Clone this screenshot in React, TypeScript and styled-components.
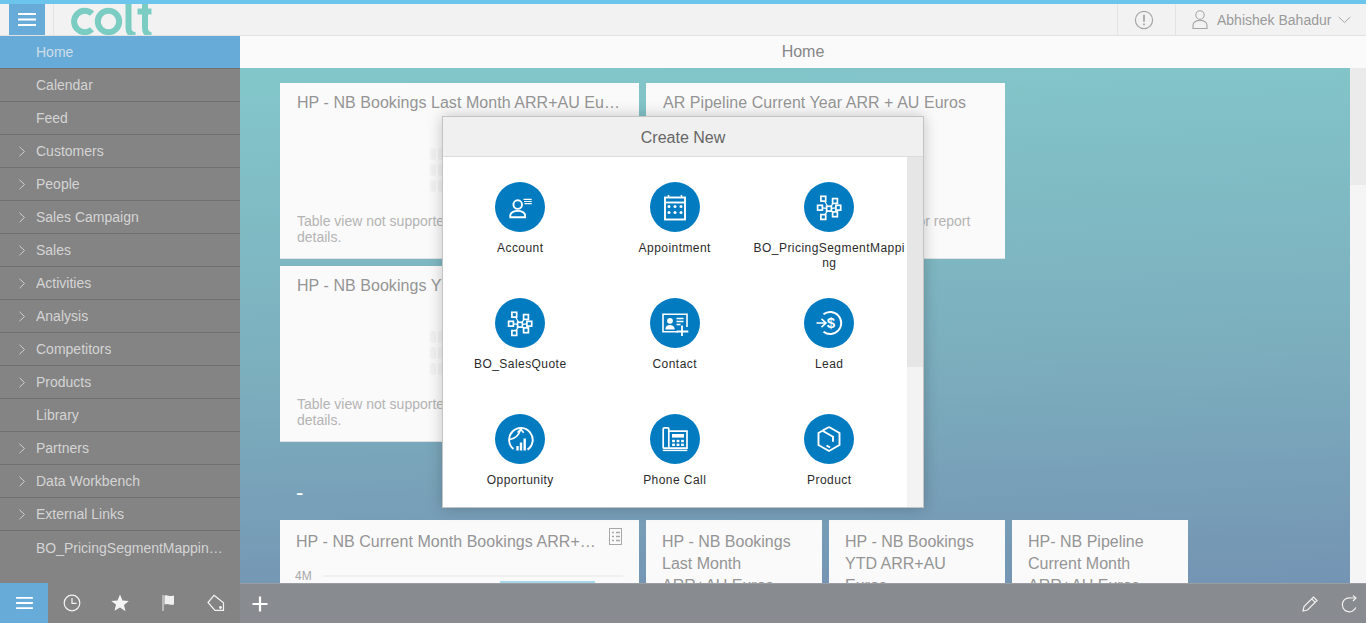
import React, { FC, ReactNode } from "react";
import styled, { createGlobalStyle } from "styled-components";

const GlobalStyle = createGlobalStyle`
  html, body, #root { margin: 0; height: 100%; overflow: hidden; }
  body { font-family: "Liberation Sans", Arial, sans-serif; }
  * { box-sizing: border-box; }
`;

const Page = styled.div`
  position: relative;
  display: flex;
  flex-direction: column;
  height: 100vh;
  border-top: 4px solid #6cc5ec;
  background: #f5f5f5;
`;

const TopBar = styled.header`
  display: flex;
  align-items: stretch;
  height: 32px;
  flex: none;
  background: #f2f2f2;
  border-bottom: 1px solid #e2e2e2;
`;

const MenuToggle = styled.div`
  display: flex;
  align-items: center;
  justify-content: center;
  width: 36px;
  margin-left: 9px;
  background: #67acd8;
`;

const LogoSlot = styled.div`
  width: 200px;
  margin-left: 8px;
  padding-left: 16px;
  border-left: 1px solid #e4e4e4;
  overflow: hidden;
`;

const Spacer = styled.div`
  flex: 1;
`;

const AlertSlot = styled.div`
  display: flex;
  align-items: center;
  justify-content: center;
  width: 59px;
  padding-right: 6px;
  border-left: 1px solid #e4e4e4;
  border-right: 1px solid #e4e4e4;
`;

const UserSlot = styled.div`
  display: flex;
  align-items: center;
  width: 190px;
  padding-left: 16px;
  font-size: 14px;
  color: #9a9a9a;
`;

const UserName = styled.span`
  margin: 0 7px 0 9px;
`;

const Main = styled.div`
  display: flex;
  flex: 1;
  min-height: 0;
`;

const Sidebar = styled.nav`
  width: 240px;
  flex: none;
  background: #848484;
  overflow: hidden;
`;

const SideRow = styled.div<{ $active?: boolean }>`
  position: relative;
  display: flex;
  align-items: center;
  height: 33px;
  padding: 0 12px 0 36px;
  font-size: 14px;
  color: ${(p) => (p.$active ? "#d0dee8" : "#d4d4d4")};
  background: ${(p) => (p.$active ? "#67acd8" : "transparent")};
  border-bottom: 1px solid #6f6f6f;
  &:last-child { border-bottom: none; }
`;

const SideLabel = styled.span`
  overflow: hidden;
  white-space: nowrap;
  text-overflow: ellipsis;
`;

const Chevron = styled.svg`
  position: absolute;
  left: 18px;
  top: 11px;
`;

const ContentColumn = styled.div`
  display: flex;
  flex-direction: column;
  flex: 1;
  min-width: 0;
`;

const SubHeader = styled.div`
  height: 32px;
  flex: none;
  display: flex;
  align-items: center;
  justify-content: center;
  font-size: 16px;
  color: #868686;
  background: #fafafa;
`;

const ContentRow = styled.div`
  display: flex;
  flex: 1;
  min-height: 0;
`;

const Canvas = styled.main`
  flex: 1;
  padding: 15px 40px 0;
  overflow: hidden;
  background: linear-gradient(178deg, #83c7ca 0%, #7cafbe 55%, #7494b3 100%);
`;

const Track = styled.div`
  width: 16px;
  flex: none;
  background: #f5f5f5;
`;

const Thumb = styled.div`
  height: 117px;
  background: #ebebeb;
`;

const TileGrid = styled.section`
  display: grid;
  grid-template-columns: 359px 359px;
  gap: 7px;
`;

const Tile = styled.article`
  position: relative;
  height: 176px;
  padding: 10px 17px;
  background: #fafafa;
  border-bottom: 1px solid #dde3e5;
  overflow: hidden;
`;

const TileTitle = styled.h3`
  margin: 0;
  font-size: 16px;
  font-weight: 400;
  line-height: 20px;
  letter-spacing: 0.05px;
  color: #959595;
  white-space: nowrap;
  overflow: hidden;
  text-overflow: ellipsis;
`;

const TileNote = styled.p`
  position: absolute;
  left: 17px;
  right: 17px;
  top: 130px;
  margin: 0;
  font-size: 14px;
  line-height: 16px;
  color: #b4b4b4;
`;

const GhostTable = styled.div`
  position: absolute;
  left: 150px;
  top: 65px;
  display: grid;
  grid-template-columns: 6px 40px;
  grid-auto-rows: 12px;
  gap: 4px 2px;
`;

const GhostCell = styled.div`
  border-radius: 2px;
  background: #f2f2f2;
`;

const SectionDash = styled.div`
  height: 78px;
  padding: 41px 0 0 16px;
  font-size: 22px;
  line-height: 20px;
  color: #ffffff;
`;

const BottomTiles = styled.section`
  display: flex;
  gap: 7px;
`;

const ChartTile = styled.article`
  position: relative;
  width: 359px;
  height: 120px;
  padding: 12px 42px 0 16px;
  background: #fafafa;
`;

const SmallTile = styled.article`
  width: 176px;
  height: 120px;
  padding: 11px 16px 0;
  font-size: 16px;
  line-height: 22px;
  color: #959595;
  background: #fafafa;
`;

const TableGlyph = styled.svg`
  position: absolute;
  top: 8px;
  right: 16px;
`;

const AxisLabel = styled.span`
  position: absolute;
  left: 15px;
  top: 49px;
  font-size: 12px;
  color: #a8a8a8;
`;

const GridLine = styled.div`
  position: absolute;
  left: 43px;
  right: 16px;
  top: 55px;
  height: 2px;
  background: #f0f0f0;
`;

const Bar = styled.div`
  position: absolute;
  left: 220px;
  top: 61px;
  width: 95px;
  height: 40px;
  background: #a6d8ec;
`;

const BottomBar = styled.footer`
  display: flex;
  align-items: stretch;
  height: 40px;
  flex: none;
  background: #888c90;
  border-top: 1px solid #9a9ea2;
`;

const BottomNav = styled.div`
  display: flex;
  width: 240px;
  margin-top: -1px;
  background: #848484;
`;

const NavTile = styled.div<{ $active?: boolean }>`
  display: flex;
  align-items: center;
  justify-content: center;
  width: 48px;
  background: ${(p) => (p.$active ? "#67acd8" : "transparent")};
`;

const AddButton = styled.div`
  display: flex;
  align-items: center;
  justify-content: center;
  width: 40px;
`;

const BottomActions = styled.div`
  display: flex;
  align-items: center;
  gap: 23px;
  padding-right: 7px;
`;

const Modal = styled.div`
  position: absolute;
  left: 442px;
  top: 112px;
  width: 482px;
  height: 392px;
  display: flex;
  flex-direction: column;
  background: #ffffff;
  border: 1px solid #c4c4c4;
  box-shadow: 0 0 14px rgba(0, 0, 0, 0.22);
`;

const ModalHeader = styled.div`
  display: flex;
  align-items: center;
  justify-content: center;
  height: 40px;
  padding-top: 2px;
  flex: none;
  font-size: 16px;
  color: #666666;
  background: #f0f0f0;
  border-bottom: 1px solid #dcdcdc;
`;

const ModalBody = styled.div`
  display: flex;
  flex: 1;
  min-height: 0;
`;

const CreateGrid = styled.div`
  flex: 1;
  display: grid;
  grid-template-columns: repeat(3, 154.5px);
  grid-auto-rows: 116px;
  padding-top: 25px;
  overflow: hidden;
`;

const CreateItem = styled.div`
  display: flex;
  flex-direction: column;
  align-items: center;
  min-width: 0;
`;

const IconCircle = styled.div`
  width: 50px;
  height: 50px;
  flex: none;
  border-radius: 50%;
  background: #027bc1;
`;

const ItemLabel = styled.div`
  width: 154px;
  margin-top: 9px;
  font-size: 12px;
  line-height: 15px;
  letter-spacing: 0.45px;
  text-align: center;
  color: #2b2b2b;
  overflow-wrap: anywhere;
`;

const ModalScroll = styled.div`
  width: 16px;
  flex: none;
  background: #f3f3f3;
`;

const ModalThumb = styled.div`
  height: 210px;
  background: #e6e6e6;
`;

const W: FC<{ children: ReactNode }> = ({ children }) => (
  <svg width="50" height="50" viewBox="0 0 50 50" fill="none" stroke="#fff" strokeWidth="1.7">
    {children}
  </svg>
);

const Hierarchy = () => (
  <W>
    {[[19.3, 16.7], [31, 19], [16, 25.7], [34.3, 25.7], [19.3, 35], [31, 32.3]].map(([x, y]) => (
      <React.Fragment key={`${x}-${y}`}>
        <path d={`M25 26.7L${x} ${y}`} strokeWidth="1.2" />
        <rect x={x - 2.4} y={y - 2.4} width="4.8" height="4.8" fill="#027bc1" />
      </React.Fragment>
    ))}
    <rect x="22.6" y="24.3" width="4.8" height="4.8" fill="#027bc1" />
  </W>
);

const icons: Record<string, ReactNode> = {
  Account: (
    <W>
      <circle cx="22.7" cy="22.6" r="4.3" strokeWidth="1.9" />
      <path d="M15.3 35.3v-2c0-2.6 3.6-4.4 7.4-4.4s7.4 1.8 7.4 4.4v2z" strokeWidth="1.9" />
      <path d="M28.5 17.3h8.2M29 19.5h7.7M29.5 21.7h7.2" strokeWidth="1.2" />
    </W>
  ),
  Appointment: (
    <W>
      <rect x="15" y="15.5" width="20" height="22" strokeWidth="1.9" />
      <path d="M15 20.5h20" strokeWidth="1.9" />
      <path d="M18.5 13v3M31.5 13v3" strokeWidth="1.6" />
      {[19, 25, 31].map((x) =>
        [24.5, 30.5].map((y) => <circle key={`${x}${y}`} cx={x} cy={y} r="1.5" fill="#fff" stroke="none" />)
      )}
    </W>
  ),
  Hierarchy: <Hierarchy />,
  Contact: (
    <W>
      <path d="M28 33.7H13V16.3h24V29" strokeWidth="1.6" />
      <circle cx="20" cy="22.8" r="2.9" fill="#fff" stroke="none" />
      <path d="M15.3 31.5c0-3 2.2-4.4 4.7-4.4s4.7 1.4 4.7 4.4z" fill="#fff" stroke="none" />
      <path d="M26.5 20.5h7M26.5 23.5h7M26.5 26.5h4" strokeWidth="1.3" />
      <path d="M32 27.5v10.4M26.7 33.5h11.6" strokeWidth="1.8" />
    </W>
  ),
  Lead: (
    <W>
      <path d="M19.5 16.3a11 11 0 1 1 0 17.4" strokeWidth="1.9" />
      <path d="M12.5 25h9.5M17.5 20.8l4.5 4.2-4.5 4.2" strokeWidth="1.6" />
      <text x="27" y="30.2" fontFamily="Liberation Sans" fontSize="15" fontWeight="700" fill="#fff" stroke="none" textAnchor="middle">$</text>
    </W>
  ),
  Opportunity: (
    <W>
      <path d="M18.5 35a11.8 11.8 0 1 1 14 .6" strokeWidth="1.9" />
      <path d="M15 25.5c5-1 8.5-3.5 10.5-9.5" strokeWidth="1.6" />
      <path d="M22.5 18.5l3.3-3.3 2.9 3.5" strokeWidth="1.6" />
      <path d="M22.5 36.5v-4.5M26 36.5V28.5M29.7 36.5V24.5" strokeWidth="2.4" />
    </W>
  ),
  Phone: (
    <W>
      <rect x="13.2" y="13.8" width="5.6" height="20.4" rx="1" strokeWidth="1.7" />
      <path d="M12.7 36.4h24.6" strokeWidth="1.5" />
      <path d="M19 17.2h18v17H19" strokeWidth="1.7" />
      <rect x="22" y="20" width="12" height="3.6" fill="#fff" stroke="none" />
      {[23.5, 28, 32.5].map((x) =>
        [27, 30.8].map((y) => <rect key={`${x}${y}`} x={x - 1.4} y={y - 1.2} width="2.8" height="2.4" fill="#fff" stroke="none" />)
      )}
    </W>
  ),
  Product: (
    <W>
      <path d="M25 13l10.5 6v12L25 37l-10.5-6V19l4-2.3" strokeWidth="1.9" />
      <path d="M18.5 16.7L29 22.7v5M25 13l-6.5 3.7" strokeWidth="1.9" />
      <path d="M22.5 31.5l3.6 2" strokeWidth="2" />
    </W>
  ),
};

const createItems = [
  { label: "Account", icon: "Account" },
  { label: "Appointment", icon: "Appointment" },
  { label: "BO_PricingSegmentMapping", icon: "Hierarchy" },
  { label: "BO_SalesQuote", icon: "Hierarchy" },
  { label: "Contact", icon: "Contact" },
  { label: "Lead", icon: "Lead" },
  { label: "Opportunity", icon: "Opportunity" },
  { label: "Phone Call", icon: "Phone" },
  { label: "Product", icon: "Product" },
];

const sideItems = [
  { title: "Home" },
  { title: "Calendar" },
  { title: "Feed" },
  { title: "Customers", sub: true },
  { title: "People", sub: true },
  { title: "Sales Campaign", sub: true },
  { title: "Sales", sub: true },
  { title: "Activities", sub: true },
  { title: "Analysis", sub: true },
  { title: "Competitors", sub: true },
  { title: "Products", sub: true },
  { title: "Library" },
  { title: "Partners", sub: true },
  { title: "Data Workbench", sub: true },
  { title: "External Links", sub: true },
  { title: "BO_PricingSegmentMappin…" },
];

const Burger: FC<{ size: number }> = ({ size }) => (
  <svg width={size} height={size - 3} viewBox="0 0 18 15" stroke="#fff" strokeWidth="2">
    <path d="M0 2h18M0 7.5h18M0 13h18" />
  </svg>
);

const NoDataTile: FC<{ title: string; note: string }> = ({ title, note }) => (
  <Tile>
    <TileTitle>{title}</TileTitle>
    <GhostTable>
      {Array.from({ length: 6 }).map((_, i) => (
        <GhostCell key={i} />
      ))}
    </GhostTable>
    <TileNote>{note}</TileNote>
  </Tile>
);

const NOTE = "Table view not supported for this dataset or report details.";

const App: FC = () => (
  <Page>
    <GlobalStyle />
    <TopBar>
      <MenuToggle>
        <Burger size={18} />
      </MenuToggle>
      <LogoSlot>
        <svg width="84" height="31" viewBox="0 0 84 31" fill="none" stroke="#7bcdc3" strokeWidth="6">
          <path d="M22 9.6a10.7 10.7 0 1 0 0 15.8" />
          <circle cx="38.5" cy="17.5" r="10.7" />
          <path d="M58.5 -2v26c0 4 2 7 7 7" />
          <path d="M75 -2v26c0 4 2 7 6.5 7M67.5 7.5h14" />
        </svg>
      </LogoSlot>
      <Spacer />
      <AlertSlot>
        <svg width="20" height="20" viewBox="0 0 20 20" fill="none" stroke="#a6a6a6" strokeWidth="1.2">
          <circle cx="10" cy="10" r="8.6" />
          <path d="M10 4.8v7" strokeWidth="1.8" />
          <path d="M10 13.5v1.8" strokeWidth="1.8" />
        </svg>
      </AlertSlot>
      <UserSlot>
        <svg width="16" height="20" viewBox="0 0 16 20" fill="none" stroke="#a6a6a6" strokeWidth="1.1">
          <circle cx="8" cy="5" r="4.2" />
          <path d="M1 18.5v-3.5c0-2.6 3-4.6 7-4.6s7 2 7 4.6v3.5z" />
        </svg>
        <UserName>Abhishek Bahadur</UserName>
        <svg width="13" height="8" viewBox="0 0 13 8" fill="none" stroke="#a6a6a6" strokeWidth="1">
          <path d="M.7 1l5.8 5.6L12.3 1" />
        </svg>
      </UserSlot>
    </TopBar>
    <Main>
      <Sidebar>
        {sideItems.map((item, index) => (
          <SideRow key={item.title} $active={index === 0}>
            {item.sub && (
              <Chevron width="8" height="11" viewBox="0 0 8 11" fill="none" stroke="#cfcfcf" strokeWidth="1">
                <path d="M1.5 .8l5 4.7-5 4.7" />
              </Chevron>
            )}
            <SideLabel>{item.title}</SideLabel>
          </SideRow>
        ))}
      </Sidebar>
      <ContentColumn>
        <SubHeader>Home</SubHeader>
        <ContentRow>
          <Canvas>
            <TileGrid>
              <NoDataTile title="HP - NB Bookings Last Month ARR+AU Euros" note={NOTE} />
              <NoDataTile title="AR Pipeline Current Year ARR + AU Euros" note={NOTE} />
              <NoDataTile title="HP - NB Bookings YTD ARR+AU Euros" note={NOTE} />
            </TileGrid>
            <SectionDash>-</SectionDash>
            <BottomTiles>
              <ChartTile>
                <TileTitle>HP - NB Current Month Bookings ARR+AU Euros</TileTitle>
                <TableGlyph width="14" height="18" viewBox="0 0 14 18" fill="none" stroke="#a8a8a8">
                  <rect x=".5" y=".5" width="12" height="16" />
                  <path d="M3 4.5h2M7 4.5h4M3 8.5h2M7 8.5h4M3 12.5h2M7 12.5h4" strokeWidth="1.4" />
                </TableGlyph>
                <AxisLabel>4M</AxisLabel>
                <GridLine />
                <Bar />
              </ChartTile>
              <SmallTile>HP - NB Bookings Last Month ARR+AU Euros</SmallTile>
              <SmallTile>HP - NB Bookings YTD ARR+AU Euros</SmallTile>
              <SmallTile>HP- NB Pipeline Current Month ARR+AU Euros</SmallTile>
            </BottomTiles>
          </Canvas>
          <Track>
            <Thumb />
          </Track>
        </ContentRow>
      </ContentColumn>
    </Main>
    <BottomBar>
      <BottomNav>
        <NavTile $active>
          <Burger size={17} />
        </NavTile>
        <NavTile>
          <svg width="18" height="18" viewBox="0 0 18 18" fill="none" stroke="#f4f4f4" strokeWidth="1.2">
            <circle cx="9" cy="9" r="7.8" />
            <path d="M9 4v5.3h4.5" />
          </svg>
        </NavTile>
        <NavTile>
          <svg width="18" height="18" viewBox="0 0 18 18" fill="#f4f4f4">
            <path d="M9 .5l2.5 5.9 6.3.5-4.8 4.1 1.5 6.2L9 13.4l-5.5 3.3L5 10.5.2 6.9l6.3-.5z" />
          </svg>
        </NavTile>
        <NavTile>
          <svg width="16" height="18" viewBox="0 0 16 18" fill="#f0f0f0">
            <path d="M2.5 1h1v16h-1z" />
            <path d="M4.5 1.5c3-1 4.5 1 7 .5l2.5-.5v9c-3 1-4.5-.5-7-.5l-2.5.5z" />
          </svg>
        </NavTile>
        <NavTile>
          <svg width="18" height="18" viewBox="0 0 18 18" fill="none" stroke="#f4f4f4" strokeWidth="1.2">
            <path d="M7 1.3l9.5 7.5v7.5H8L1 8.5z" />
            <circle cx="13.5" cy="13.5" r=".8" fill="#f4f4f4" />
          </svg>
        </NavTile>
      </BottomNav>
      <AddButton>
        <svg width="16" height="16" viewBox="0 0 16 16" stroke="#fff" strokeWidth="2.2">
          <path d="M8 .5v15M.5 8h15" />
        </svg>
      </AddButton>
      <Spacer />
      <BottomActions>
        <svg width="16" height="16" viewBox="0 0 16 16" fill="none" stroke="#f0f0f0" strokeWidth="1.2">
          <path d="M1 15l1-4.500L11.5 1 15 4.500 5.500 14z" />
          <path d="M9.7 2.8l3.5 3.5" />
        </svg>
        <svg width="18" height="18" viewBox="0 0 18 18" fill="none" stroke="#f0f0f0" strokeWidth="1.2">
          <path d="M14.8 12.5A7 7 0 1 1 10 3h5" />
          <path d="M12 .5L15 3l-3 3" />
        </svg>
      </BottomActions>
    </BottomBar>
    <Modal>
      <ModalHeader>Create New</ModalHeader>
      <ModalBody>
        <CreateGrid>
          {createItems.map((item) => (
            <CreateItem key={item.label}>
              <IconCircle>{icons[item.icon]}</IconCircle>
              <ItemLabel>{item.label}</ItemLabel>
            </CreateItem>
          ))}
        </CreateGrid>
        <ModalScroll>
          <ModalThumb />
        </ModalScroll>
      </ModalBody>
    </Modal>
  </Page>
);

export default App;
